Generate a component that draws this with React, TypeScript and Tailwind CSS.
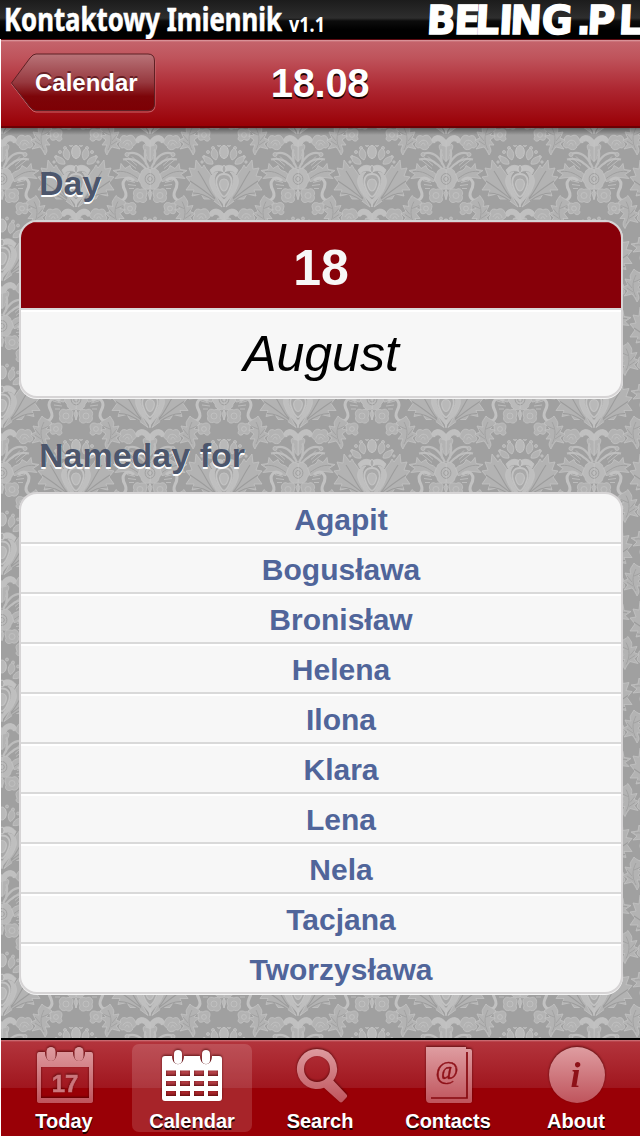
import type { ReactNode } from "react";

const HELV = "font-['Liberation_Sans',Arial,sans-serif]";

const NAMES = [
  "Agapit",
  "Bogusława",
  "Bronisław",
  "Helena",
  "Ilona",
  "Klara",
  "Lena",
  "Nela",
  "Tacjana",
  "Tworzysława",
];

/* Right half of the damask ornament; the left half is its mirror image. */
function OrnamentHalf() {
  return (
    <g fill="#b3b3b3" stroke="#c3c3c3" strokeWidth="0.8">
      <circle cx="5" cy="0" r="1.5" />
      <circle cx="11" cy="3" r="1.5" />
      <circle cx="16" cy="7" r="1.5" />
      <circle cx="20" cy="12" r="1.4" />
      <circle cx="22" cy="17" r="1.2" />
      <path d="M10 3C15 7 13 13 8 15C5 11 6 6 10 3Z" />
      <path d="M20 11C21 17 17 20 11 19C11 14 15 12 20 11Z" />
      <path d="M0 22C5 19 10 20 14 25L12 29C9 25 5 25 0 27Z" fill="#c2c2c2" />
      {/* large leaves */}
      <path d="M12 33C14 27 18 25 20 20L22 23L28 15L29 24L35 23L32 31L38 32L33 38L38 45L30 45L32 51L23 49L20 54L13 54L2 62L8 51C13 45 13 39 12 33Z" />
      <path d="M9 53C15 47 18 38 26 26M9 54C17 48 23 43 34 36M10 56C18 50 24 48 31 48" fill="none" stroke="#9c9c9c" strokeWidth="1.1" />
      {/* shield */}
      <path d="M0 62C-1 58 9 52 13 42C17 34 12 27 6 27C11 31 10 38 7 44C5 49 2 53 0 55Z" fill="#bfbfbf" />
      <path d="M0 29C7 29 9 35 7 41C5 47 2 51 0 52" fill="#a9a9a9" strokeWidth="1.8" />
      <path d="M0 34C4 34 5 38 4 41C3 44 1 46 0 46" fill="#b9b9b9" strokeWidth="1.2" />
      {/* lower scroll and flowers */}
      <path d="M0 69C3 65 8 62 13 66C16 69 14 72 11 71C10 69 6 68 4 73L0 78Z" fill="#c0c0c0" />
      <path d="M15 68C16 63 21 63 23 65C28 62 31 67 29 70C33 73 29 78 26 76C22 80 17 78 17 74C13 73 13 69 15 68Z" />
      <path d="M18 73C18 68 25 67 27 72M21 74C21 71 24 71 25 74" fill="none" />
      <path d="M0 75L6 73C9 76 3 81 3 87L0 90Z" />
      <circle cx="23" cy="83" r="2" />
      {/* arching stems */}
      <path d="M1 97C5 88 11 79 22 82M2 99C8 94 14 85 27 88M4 93C4 87 7 80 4 78" fill="none" strokeWidth="2.2" stroke="#bdbdbd" />
      <path d="M10 93L18 85M13 94L22 86M14 97L25 88" fill="none" strokeWidth="0.8" />
      {/* rose */}
      <path d="M0 98C5 95 9 99 9 102C13 104 12 110 9 112C9 117 3 119 0 117Z" fill="#bababa" />
      <path d="M0 102C6 102 7 112 0 113M0 105C3 105 3 110 0 110" fill="none" stroke="#989898" />
      <path d="M10 103C13 98 18 101 20 94L25 97L29 92L30 98L37 99L31 103L35 107L26 106C21 105 17 110 12 110Z" />
      <path d="M12 107C18 103 23 99 33 100" fill="none" stroke="#999" />
      {/* hook */}
      <path d="M16 109C24 103 30 110 25 119C22 126 27 131 33 128" fill="none" strokeWidth="3" stroke="#c2c2c2" />
      <path d="M15 111L23 109M14 114L22 113M16 117L21 117" fill="none" strokeWidth="0.8" />
      {/* blossoms */}
      <path d="M3 121C3 117 8 117 10 118C15 115 18 121 16 124C18 129 13 132 10 130C6 133 2 129 4 126Z" />
      <circle cx="10" cy="124" r="3" fill="none" />
      <path d="M0 118L2 122L0 128Z" />
      <path d="M14 135C14 131 18 130 21 132C26 130 27 136 25 138C27 143 22 143 20 141C17 146 12 141 15 139Z" />
      <circle cx="20" cy="137" r="2.4" fill="none" />
      {/* feathered leaf */}
      <path d="M24 131C28 127 32 127 34 124C37 129 39 130 37 135L43 134L40 140L45 142L40 146L44 151L36 149C33 152 31 157 31 157C28 153 29 151 31 147L26 147L30 142L25 138L30 137Z" />
      <path d="M32 152C36 145 36 137 32 130M36 143L41 137M35 147L41 143M34 137L27 134" fill="none" stroke="#9d9d9d" />
    </g>
  );
}

function Damask() {
  return (
    <svg className="col-start-1 row-start-1 h-[910px] w-[639px]" viewBox="1 128 639 910" aria-hidden="true">
      <defs>
        <g id="half">
          <OrnamentHalf />
        </g>
        <g id="orn">
          <use href="#half" />
          <use href="#half" transform="scale(-1 1)" />
          <ellipse cx="0" cy="7" rx="4.3" ry="6.5" fill="#b9b9b9" stroke="#c6c6c6" />
          <ellipse cx="0" cy="24" rx="2" ry="3.5" fill="#aaa" stroke="#cacaca" />
        </g>
        <pattern id="damask" width="148" height="147" patternUnits="userSpaceOnUse" patternTransform="translate(2 145)">
          <rect width="148" height="147" fill="#a0a0a0" />
          <use href="#orn" x="74" y="0" />
          <use href="#orn" x="74" y="-147" />
          <use href="#orn" x="0" y="73.5" />
          <use href="#orn" x="148" y="73.5" />
          <use href="#orn" x="0" y="-73.5" />
          <use href="#orn" x="148" y="-73.5" />
        </pattern>
        <linearGradient id="topShade" x1="0" y1="0" x2="0" y2="1">
          <stop offset="0" stopColor="#000" stopOpacity="0.4" />
          <stop offset="1" stopColor="#000" stopOpacity="0" />
        </linearGradient>
      </defs>
      <rect x="1" y="128" width="639" height="910" fill="url(#damask)" />
      <rect x="1" y="128" width="639" height="7" fill="url(#topShade)" />
    </svg>
  );
}

function Banner() {
  return (
    <header className="h-[39px] w-full bg-[linear-gradient(#1c1c1c_0px,#2e2e2e_18px,#0c0c0c_21px,#000_30px)]">
      <svg className="block h-[39px] w-[640px] overflow-hidden" viewBox="0 0 640 39">
        <g fill="#fff" stroke="#fff" strokeWidth="0.6" fontFamily="'Noto Sans', sans-serif" fontWeight="700">
          <text x="4" y="31" fontSize="32.5" textLength="278" lengthAdjust="spacingAndGlyphs">
            Kontaktowy Imiennik
          </text>
          <text x="289" y="31.500" fontSize="21" strokeWidth="0" textLength="36" lengthAdjust="spacingAndGlyphs">
            v1.1
          </text>
        </g>
        <text
          transform="translate(426 33.500) skewX(-3) scale(0.95 1)"
          x="0 29 51 76 88 121 158 169 202"
          y="0"
          fontFamily="'DejaVu Sans', sans-serif"
          fontWeight="700"
          fontSize="40"
          fill="#fff"
          stroke="#fff"
          strokeWidth="1.4"
        >
          BELING.PL
        </text>
      </svg>
    </header>
  );
}

function BackButton() {
  return (
    <button className="grid h-[60px] w-[146px]">
      <svg className="col-start-1 row-start-1" width="146" height="60" viewBox="10 54 146 60" aria-hidden="true">
        <defs>
          <linearGradient id="back" x1="0" y1="0" x2="0" y2="1">
            <stop offset="0" stopColor="#b97479" />
            <stop offset="0.5" stopColor="#97393f" />
            <stop offset="0.75" stopColor="#7c0509" />
            <stop offset="1" stopColor="#7d0004" />
          </linearGradient>
        </defs>
        <path d="M36 56H148Q155 56 155 63V106Q155 113 148 113H36Q33 113 30 109L11.500 85L30 60Q33 56 36 56Z" fill="none" stroke="#d17a80" strokeOpacity="0.8" />
        <path d="M36 55H148Q154.500 55 154.500 62V105Q154.500 111.500 148 111.500H36Q33 111.500 30 108L11.500 84L30 59Q33 55 36 55Z" fill="url(#back)" stroke="#5e2024" />
      </svg>
      <span className="col-start-1 row-start-1 self-center pl-[25px] text-left text-[24px] leading-[28px] font-bold text-white [text-shadow:0_-2px_0_rgba(70,10,14,0.65)]">
        Calendar
      </span>
    </button>
  );
}

function NavBar() {
  return (
    <nav className="grid h-[89px] grid-cols-[1fr_auto_1fr] items-center border-t border-b-2 border-t-[#5a0a10] border-b-[#6c0004] bg-[linear-gradient(#e0a0a5_0px,#c4636b_2px,#bf535b_18px,#ad2630_50px,#990006_86px)] pr-[10px] pl-[9px]">
      <BackButton />
      <h1 className="text-[40px] leading-[45px] font-bold tracking-[-0.3px] text-white [text-shadow:0_2px_0_#1a0000]">18.08</h1>
      <span />
    </nav>
  );
}

function SectionTitle({ children }: { children: ReactNode }) {
  return (
    <h2 className="mb-[17px] pl-[20px] text-[34px] leading-[40px] font-bold text-[#4c566c] [text-shadow:0_2px_0_#fff]">{children}</h2>
  );
}

const CARD =
  "overflow-hidden rounded-[18px] border-2 border-[#d6d4d5] bg-[#f7f7f7] shadow-[0_1px_0_#f4f4f4]";

function Tab({ label, active, children }: { label: string; active?: boolean; children: ReactNode }) {
  return (
    <button
      className={
        "flex h-[88px] w-[120px] flex-col items-center rounded-[7px] " + (active ? "bg-white/[0.14]" : "")
      }
    >
      <svg width="64" height="62" viewBox="0 0 64 62" className="overflow-visible drop-shadow-[0_-1px_1px_rgba(60,0,0,0.7)]" aria-hidden="true">
        {children}
      </svg>
      <span className="mt-[4px] text-[20px] leading-[22px] font-bold text-white [text-shadow:0_2px_0_#1a0000]">{label}</span>
    </button>
  );
}

function TabBar() {
  return (
    <footer className="flex h-[98px] items-start justify-between border-t-2 border-black bg-[linear-gradient(#d07a80_0px,#b3343c_2px,#a0161e_48px,#990006_48px)] pt-[4px] pr-[4px] pl-[3px]">
      <svg width="0" height="0" className="absolute" aria-hidden="true">
        <defs>
          <linearGradient id="pink" gradientUnits="userSpaceOnUse" x1="0" y1="3" x2="0" y2="59">
            <stop offset="0" stopColor="#df9da1" />
            <stop offset="1" stopColor="#bf545c" />
          </linearGradient>
        </defs>
      </svg>
      <Tab label="Today">
        <path
          fill="url(#pink)"
          fillRule="evenodd"
          d="M7 8H13C13 20 25 20 25 8H41C41 20 53 20 53 8H59Q61 8 61 11V57Q61 59 58 59H8Q5 59 5 57V11Q5 8 7 8ZM9 23V54H57V23Z"
        />
        <rect x="14.500" y="3" width="9" height="14" rx="4.500" fill="url(#pink)" />
        <rect x="42.500" y="3" width="9" height="14" rx="4.500" fill="url(#pink)" />
        <text x="33" y="47.500" fontSize="24" fontWeight="700" fontFamily="'Liberation Sans', sans-serif" textAnchor="middle" fill="#cb767c" stroke="#cb767c" strokeWidth="0.5">
          17
        </text>
      </Tab>
      <Tab label="Calendar" active>
        <path
          fill="#fff"
          fillRule="evenodd"
          d="M5 12H12C12 23 24 23 24 12H40C40 23 52 23 52 12H59Q62 12 62 15V54Q62 57 59 57H5Q2 57 2 54V15Q2 12 5 12ZM6 26.500V32H16V26.500ZM20 26.500V32H30V26.500ZM34 26.500V32H44V26.500ZM48 26.500V32H58V26.500ZM6 37V42H16V37ZM20 37V42H30V37ZM34 37V42H44V37ZM48 37V42H58V37ZM6 47V52H16V47ZM20 47V52H30V47ZM34 47V52H44V47ZM48 47V52H58V47Z"
        />
        <rect x="14" y="6" width="8" height="14" rx="4" fill="#fff" />
        <rect x="42" y="6" width="8" height="14" rx="4" fill="#fff" />
      </Tab>
      <Tab label="Search">
        <path
          fill="url(#pink)"
          fillRule="evenodd"
          d="M29 5A20 20 0 1 0 36 43.700L51.500 57.800Q53 59.200 54.500 57.800L58.500 53.500Q59.800 52 58.500 50.500L45.300 36.500A20 20 0 0 0 29 5ZM29 12A13 13 0 1 1 29 38A13 13 0 1 1 29 12Z"
        />
      </Tab>
      <Tab label="Contacts">
        <path fill="url(#pink)" d="M10 3H50V5H54Q56 5 56 7V57Q56 59 53 59H14Q10 59 10 55Z" />
        <path d="M51 8V54H15" fill="none" stroke="#86090f" strokeWidth="1.700" />
        <text x="31" y="35" fontSize="25" fontFamily="'Liberation Serif', serif" textAnchor="middle" fill="#8e1118" stroke="#8e1118" strokeWidth="0.4">
          @
        </text>
      </Tab>
      <Tab label="About">
        <circle cx="33" cy="31" r="28" fill="url(#pink)" />
        <text x="31.500" y="42.500" fontSize="36" fontWeight="700" fontStyle="italic" fontFamily="'Liberation Serif', serif" textAnchor="middle" fill="#8e1118">
          i
        </text>
      </Tab>
    </footer>
  );
}

export default function App() {
  return (
    <div className={`flex h-[1136px] w-[640px] flex-col overflow-hidden bg-white ${HELV}`}>
      <Banner />
      <div className="flex flex-1 flex-col pl-px">
        <NavBar />
        <div className="grid h-[910px]">
          <Damask />
          <main className="relative col-start-1 row-start-1 pt-[35px] pr-[17px] pl-[18px]">
            <SectionTitle>Day</SectionTitle>
            <section className={CARD}>
              <div className="h-[86px] border-t border-[#a5303a] bg-[#870009] pt-[4px] text-center text-[50px] leading-[82px] font-bold text-[#f7f7f7]">
                18
              </div>
              <div className="h-[88px] border-t-2 border-[#d9d7d8] pt-px text-center text-[50px] leading-[86px] text-black italic shadow-[inset_0_2px_0_#fff]">
                August
              </div>
            </section>
            <div className="h-[37px]" />
            <SectionTitle>Nameday for</SectionTitle>
            <ul className={CARD}>
              {NAMES.map((name, i) => (
                <li
                  key={name}
                  className={
                    "pt-[3px] pl-[40px] text-center text-[30px] leading-[45px] font-bold text-[#50659a] " +
                    (i > 0 ? "h-[50px] border-t-2 border-[#d9d9d9] shadow-[inset_0_2px_0_#fff]" : "h-[48px]")
                  }
                >
                  {name}
                </li>
              ))}
            </ul>
          </main>
        </div>
        <TabBar />
      </div>
    </div>
  );
}
